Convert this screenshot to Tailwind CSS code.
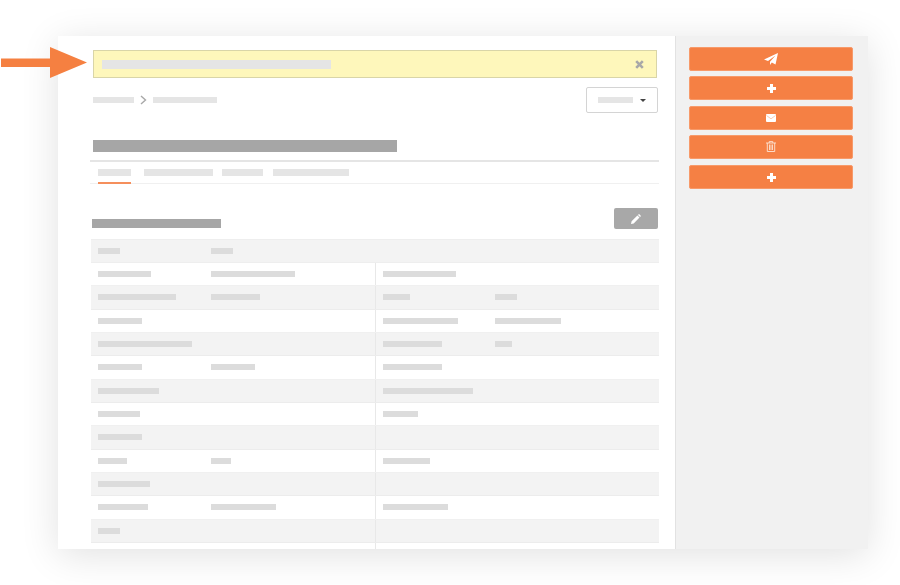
<!DOCTYPE html>
<html lang="en">

<head>
    <meta charset="UTF-8">
    <title>Record detail</title>
    <script src="https://cdn.jsdelivr.net/npm/@tailwindcss/browser@4"></script>
</head>

<body class="bg-white w-[900px] h-[585px] overflow-hidden relative pt-[36px] pl-[58px]">

    <!-- Arrow -->
    <svg class="absolute left-0 top-[47px]" width="88" height="32" viewBox="0 0 88 32">
        <path d="M1 11.500H50V0L87 15.500L50 31V20H1Z" fill="#f58041" />
    </svg>

    <div class="flex w-[810px] h-[513px] bg-white shadow-[0_6px_36px_rgba(0,0,0,0.12)]">
        <!-- Main -->
        <div class="w-[618px] shrink-0 overflow-hidden pt-[14px] pl-[33px] border-r border-[#e2e2e2]">

            <!-- Banner -->
            <div class="w-[564px] h-[28px] ml-[2px] flex items-center justify-between pl-[8px] pr-[12px] bg-[#fef7bb] border border-[#d9d5a8]">
                <div class="w-[229px] h-[9px] bg-[#e5e5e5]"></div>
                <svg width="9" height="9" viewBox="0 0 9 9">
                    <path d="M1.200 1.200L7.800 7.800M7.800 1.200L1.200 7.800" stroke="#a8a8a8" stroke-width="2.600" />
                </svg>
            </div>

            <!-- Breadcrumb + select -->
            <div class="flex items-center justify-between ml-[2px] w-[565px] mt-[9px] h-[26px]">
                <div class="flex items-center">
                    <div class="w-[41px] h-[6px] bg-[#e5e5e5]"></div>
                    <svg class="mx-[6px]" width="7" height="10" viewBox="0 0 7 10">
                        <path d="M1 1L5.500 5L1 9" fill="none" stroke="#a8a8a8" stroke-width="1.400" />
                    </svg>
                    <div class="w-[64px] h-[6px] bg-[#e5e5e5]"></div>
                </div>
                <div class="w-[72px] h-[26px] flex items-center pl-[11px] border border-[#d4d4d4] rounded-[2px]">
                    <div class="w-[35px] h-[6px] bg-[#e5e5e5]"></div>
                    <svg class="ml-[7px]" width="6" height="3" viewBox="0 0 6 3">
                        <path d="M0 0H6L3 3Z" fill="#444444" />
                    </svg>
                </div>
            </div>

            <!-- Title -->
            <div class="w-[304px] h-[12px] ml-[2px] mt-[27px] bg-[#a6a6a6]"></div>

            <!-- Tabs -->
            <div class="w-[569px] h-[24px] mt-[8px] -ml-[1px] flex border-t-2 border-b border-t-[#e5e5e5] border-b-[#f0f0f0]">
                <div class="w-[33px] ml-[8px] h-[14px] pt-[7px] relative box-content">
                    <div class="h-[7px] bg-[#e5e5e5]"></div>
                    <div class="absolute left-0 right-0 top-[20px] h-[2px] bg-[#f58f5c]"></div>
                </div>
                <div class="w-[69px] ml-[13px] h-[7px] mt-[7px] bg-[#e5e5e5]"></div>
                <div class="w-[41px] ml-[9px] h-[7px] mt-[7px] bg-[#e5e5e5]"></div>
                <div class="w-[76px] ml-[10px] h-[7px] mt-[7px] bg-[#e5e5e5]"></div>
            </div>

            <!-- Section heading -->
            <div class="flex items-end justify-between w-[566px] ml-[1px] mt-[24px]">
                <div class="w-[129px] h-[9px] mb-[1px] bg-[#a6a6a6]"></div>
                <div class="w-[44px] h-[21px] flex items-center justify-center bg-[#a8a8a8] rounded-[2px]">
                    <svg width="10" height="10" viewBox="0 0 10 10">
                        <path d="M0 10L0.600 7.300L6.400 1.500L8.500 3.600L2.700 9.400ZM7 0.900L7.700 0.200Q8 0 8.300 0.200L9.800 1.700Q10 2 9.800 2.300L9.100 3Z" fill="#ffffff" />
                    </svg>
                </div>
            </div>

            <!-- Table -->
            <div class="w-[568px] mt-[10px]">
                <div class="h-[24px] flex items-center pl-[7px] bg-[#f3f3f3] border-y border-[#eeeeee]">
                    <div class="w-[113px]"><div class="w-[22px] h-[6px] bg-[#dcdcdc]"></div></div>
                    <div class="w-[22px] h-[6px] bg-[#dcdcdc]"></div>
                </div>
                <div id="rows"></div>
            </div>
        </div>

        <!-- Sidebar -->
        <div class="flex-1 bg-[#f1f1f1] pt-[11px] pl-[13px] pr-[15px]">
            <div class="h-[24px] flex items-center justify-center bg-[#f58044] border border-[#f79a6a] rounded-[2px]">
                <svg width="14" height="12" viewBox="0 0 14 12">
                    <path d="M0 6.500L14 0L11.500 11.500L7.800 9.500L6 12V8.800L11.500 2.500L4 7.900Z" fill="#ffffff" />
                </svg>
            </div>
            <div class="h-[24px] mt-[5px] flex items-center justify-center bg-[#f58044] border border-[#f79a6a] rounded-[2px]">
                <svg width="9" height="9" viewBox="0 0 9 9">
                    <path d="M3 0H6V3H9V6H6V9H3V6H0V3H3Z" fill="#ffffff" />
                </svg>
            </div>
            <div class="h-[24px] mt-[6px] flex items-center justify-center bg-[#f58044] border border-[#f79a6a] rounded-[2px]">
                <svg width="10" height="8" viewBox="0 0 10 8">
                    <rect width="10" height="8" rx="1" fill="#ffffff" />
                    <path d="M0.500 1.500L5 4.800L9.500 1.500" fill="none" stroke="#f9b48f" stroke-width="0.700" />
                </svg>
            </div>
            <div class="h-[24px] mt-[5px] flex items-center justify-center bg-[#f58044] border border-[#f79a6a] rounded-[2px]">
                <svg class="-mt-[1px]" width="10" height="11" viewBox="0 0 10 11">
                    <path d="M0 2H10M3.200 2V0.600H6.800V2M1.300 2V10.500H8.700V2M3.500 3.500V9M5 3.500V9M6.500 3.500V9" fill="none" stroke="#fde3d4" stroke-width="0.900" />
                </svg>
            </div>
            <div class="h-[24px] mt-[6px] flex items-center justify-center bg-[#f58044] border border-[#f79a6a] rounded-[2px]">
                <svg width="9" height="9" viewBox="0 0 9 9">
                    <path d="M3 0H6V3H9V6H6V9H3V6H0V3H3Z" fill="#ffffff" />
                </svg>
            </div>
        </div>
    </div>

    <script>
        // [col1, col2, col3, col4] placeholder widths, 0 = empty cell
        const rows = [
            [53, 84, 73, 0],
            [78, 49, 27, 22],
            [44, 0, 75, 66],
            [94, 0, 59, 17],
            [44, 44, 59, 0],
            [61, 0, 90, 0],
            [42, 0, 35, 0],
            [44, 0, 0, 0],
            [29, 20, 47, 0],
            [52, 0, 0, 0],
            [50, 65, 65, 0],
            [22, 0, 0, 0],
            [0, 0, 0, 0]
        ];

        const bar = w => w ? `<div class="h-[6px] bg-[#dcdcdc]" style="width:${w}px"></div>` : "";

        document.getElementById("rows").innerHTML = rows.map((r, i) => `
            <div class="h-[23.330px] flex border-b ${i % 2 ? "bg-[#f3f3f3] border-[#ececec]" : "bg-white border-[#f0f0f0]"}">
                <div class="w-[284px] flex items-center pl-[7px]">
                    <div class="w-[113px]">${bar(r[0])}</div>
                    ${bar(r[1])}
                </div>
                <div class="w-[284px] flex items-center pl-[7px] border-l border-[#e8e8e8]">
                    <div class="w-[112px]">${bar(r[2])}</div>
                    ${bar(r[3])}
                </div>
            </div>`).join("");
    </script>

</body>

</html>
